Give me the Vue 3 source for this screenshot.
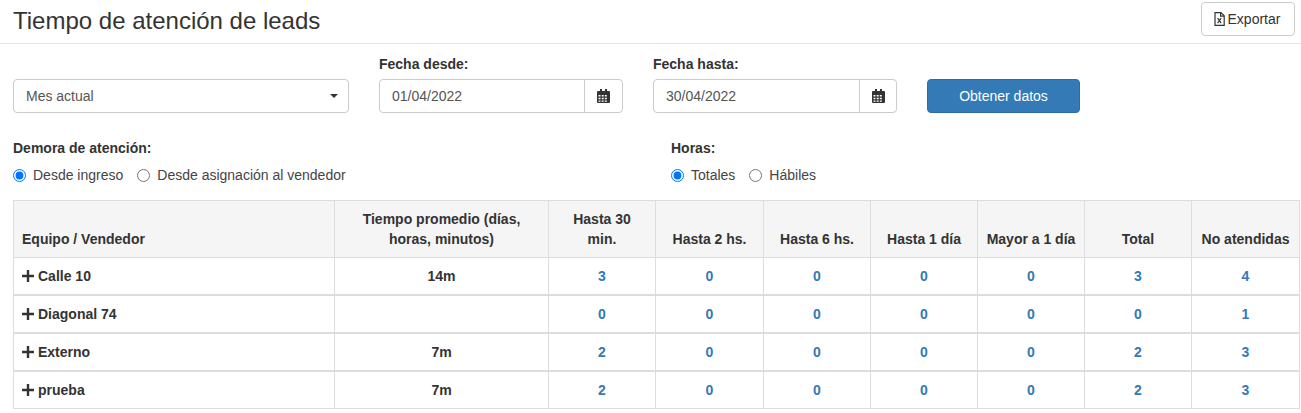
<template>
  <div class="page">
    <header class="top">
      <h1 class="title">Tiempo de atención de leads</h1>
      <button type="button" class="btn-export">
        <svg class="file-icon" width="11" height="14" viewBox="0 0 11 14">
          <path d="M1 .6h6l3.2 3.2v9.6H1z" fill="none" stroke="#333" stroke-width="1.2" />
          <path d="M6.600.8v3.400H10" fill="none" stroke="#333" stroke-width="1.2" />
          <path d="M3.600 6.200l3.600 5M7.200 6.200l-3.600 5" fill="none" stroke="#333" stroke-width="1.2" />
        </svg>
        Exportar
      </button>
    </header>

    <section class="filters">
      <div class="select">
        <span>Mes actual</span>
        <i class="caret"></i>
      </div>
      <div v-for="field in dateFields" :key="field.label" class="field">
        <label>{{ field.label }}</label>
        <div class="date-input">
          <span class="date-value">{{ field.value }}</span>
          <span class="addon">
            <svg width="13" height="14" viewBox="0 0 13 14">
              <path
                fill="#333"
                fill-rule="evenodd"
                d="M3 0h2v2h3V0h2v2h2a1 1 0 0 1 1 1v10a1 1 0 0 1-1 1H1a1 1 0 0 1-1-1V3a1 1 0 0 1 1-1h2zM1.500 6v1.500h2V6zm3.200 0v1.500h2V6h-2zm3.100 0v1.500h2V6zm-6.300 2.800v1.500h2V8.800zm3.200 0v1.500h2V8.800zm3.100 0v1.500h2V8.800zM1.500 11.500V12.700h2v-1.200zm3.200 0v1.200h2v-1.200zm3.100 0v1.200h2v-1.200z"
              />
            </svg>
          </span>
        </div>
      </div>
      <button type="button" class="btn-primary">Obtener datos</button>
    </section>

    <section class="options">
      <div class="option-group demora">
        <label>Demora de atención:</label>
        <div class="radios">
          <span v-for="opt in demoraOptions" :key="opt" class="radio">
            <input type="radio" name="demora" :value="opt" v-model="demora" />
            {{ opt }}
          </span>
        </div>
      </div>
      <div class="option-group">
        <label>Horas:</label>
        <div class="radios">
          <span v-for="opt in horasOptions" :key="opt" class="radio">
            <input type="radio" name="horas" :value="opt" v-model="horas" />
            {{ opt }}
          </span>
        </div>
      </div>
    </section>

    <table class="leads">
      <colgroup>
        <col v-for="(w, i) in colWidths" :key="i" :style="{ width: w + 'px' }" />
      </colgroup>
      <thead>
        <tr>
          <th class="left">Equipo / Vendedor</th>
          <th>Tiempo promedio (días,<br />horas, minutos)</th>
          <th>Hasta 30<br />min.</th>
          <th>Hasta 2 hs.</th>
          <th>Hasta 6 hs.</th>
          <th>Hasta 1 día</th>
          <th>Mayor a 1 día</th>
          <th>Total</th>
          <th>No atendidas</th>
        </tr>
      </thead>
      <tbody v-for="row in rows" :key="row.name">
        <tr>
          <td class="left">
            <span class="name-cell">
              <svg class="plus" width="12" height="12" viewBox="0 0 12 12">
                <path d="M4.800 0h2.400v4.800H12v2.400H7.200V12H4.800V7.200H0V4.800h4.800z" fill="#333" />
              </svg>
              {{ row.name }}
            </span>
          </td>
          <td>{{ row.time }}</td>
          <td v-for="(n, i) in row.counts" :key="i" class="count">{{ n }}</td>
        </tr>
      </tbody>
    </table>
  </div>
</template>

<script setup>
import { ref } from "vue";

const dateFields = [
  { label: "Fecha desde:", value: "01/04/2022" },
  { label: "Fecha hasta:", value: "30/04/2022" },
];

const demoraOptions = ["Desde ingreso", "Desde asignación al vendedor"];
const horasOptions = ["Totales", "Hábiles"];
const demora = ref("Desde ingreso");
const horas = ref("Totales");

const colWidths = [321, 214, 107, 108, 107, 107, 107, 107, 108];

const rows = [
  { name: "Calle 10", time: "14m", counts: [3, 0, 0, 0, 0, 3, 4] },
  { name: "Diagonal 74", time: "", counts: [0, 0, 0, 0, 0, 0, 1] },
  { name: "Externo", time: "7m", counts: [2, 0, 0, 0, 0, 2, 3] },
  { name: "prueba", time: "7m", counts: [2, 0, 0, 0, 0, 2, 3] },
];
</script>

<style>
body {
  background: #ffffff;
}
</style>

<style scoped>
.page {
  width: 1301px;
  height: 413px;
  overflow: hidden;
  font-family: "Liberation Sans", Arial, sans-serif;
  font-size: 14px;
  line-height: 20px;
  color: #333333;
}

.top {
  height: 44px;
  box-sizing: border-box;
  border-bottom: 1px solid #e5e5e5;
  padding: 2px 6px 0 13px;
  display: flex;
  justify-content: space-between;
  align-items: flex-start;
}

.title {
  margin: 5px 0 0;
  font-size: 24px;
  line-height: 28px;
  font-weight: 400;
}

.btn-export {
  width: 94px;
  height: 34px;
  padding: 0 2px 0 0;
  display: flex;
  align-items: center;
  justify-content: center;
  gap: 3px;
  border: 1px solid #cccccc;
  border-radius: 4px;
  background: #ffffff;
  color: #333333;
  font: inherit;
}

.filters {
  display: flex;
  align-items: flex-end;
  padding: 10px 0 0 13px;
}

.select {
  width: 336px;
  height: 34px;
  box-sizing: border-box;
  border: 1px solid #cccccc;
  border-radius: 4px;
  padding: 0 10px 0 12px;
  display: flex;
  align-items: center;
  justify-content: space-between;
  color: #555555;
}

.caret {
  border-top: 4px solid #333333;
  border-left: 4px solid transparent;
  border-right: 4px solid transparent;
}

.field {
  width: 244px;
  margin-left: 30px;
}

.field label,
.option-group label {
  display: block;
  font-weight: 700;
}

.field label {
  margin-bottom: 5px;
}

.date-input {
  height: 34px;
  box-sizing: border-box;
  border: 1px solid #cccccc;
  border-radius: 4px;
  display: flex;
  align-items: center;
  color: #555555;
}

.date-value {
  flex: 1;
  padding-left: 12px;
}

.addon {
  width: 38px;
  height: 32px;
  box-sizing: border-box;
  border-left: 1px solid #cccccc;
  display: flex;
  align-items: center;
  justify-content: center;
}

.field + .field .addon {
  width: 37px;
}

.btn-primary {
  width: 153px;
  height: 34px;
  margin-left: 30px;
  border: 1px solid #2e6da4;
  border-radius: 4px;
  background: #337ab7;
  color: #ffffff;
  font: inherit;
}

.options {
  display: flex;
  padding: 25px 0 0 13px;
}

.option-group {
  display: flex;
  flex-direction: column;
  gap: 7px;
}

.demora {
  width: 658px;
}

.radios {
  display: flex;
  gap: 14px;
  color: #444444;
}

.radio {
  display: flex;
  align-items: center;
  gap: 7px;
}

.radio input {
  width: 13px;
  height: 13px;
  margin: 0;
}

.leads {
  width: 1286px;
  margin: 15px 0 0 13px;
  border-collapse: collapse;
  table-layout: fixed;
  font-size: 14px;
  line-height: 20px;
  font-weight: 700;
}

.leads th,
.leads td {
  border: 1px solid #dddddd;
  padding: 0 8px;
  text-align: center;
}

.leads th {
  background: #f5f5f5;
  vertical-align: bottom;
  padding-top: 8px;
  padding-bottom: 8px;
}

.leads td {
  height: 36px;
  padding-top: 0;
  padding-bottom: 0;
}

.leads tbody + tbody td {
  border-top: 2px solid #dddddd;
}

.leads .left {
  text-align: left;
}

.name-cell {
  display: flex;
  align-items: center;
  gap: 4px;
}

.count {
  color: #337ab7;
}
</style>
